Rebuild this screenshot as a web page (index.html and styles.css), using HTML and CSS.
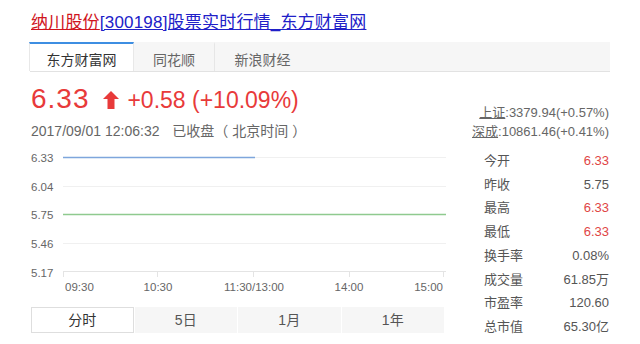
FILE: index.html
```html
<!DOCTYPE html>
<html lang="zh-CN">
<head>
    <meta charset="UTF-8">
    <meta name="viewport" content="width=device-width, initial-scale=1.0">
    <title>纳川股份[300198]股票实时行情_东方财富网</title>
    <link rel="stylesheet" href="styles.css">
</head>
<body>

<div class="page">
    <h1 class="title"><a href="#" class="title-name">纳川股份</a><a href="#" class="title-rest">[300198]股票实时行情_东方财富网</a></h1>

    <div class="tabs">
        <div class="tab active">东方财富网</div>
        <div class="tab tab-ths">同花顺</div>
        <div class="tab tab-sina">新浪财经</div>
    </div>

    <div class="quote">
        <div class="quote-left">
            <div class="price-line">
                <span class="price">6.33</span>
                <svg class="arrow" width="16" height="18" viewBox="0 0 16 18">
                    <path d="M8 0 L16 8 L11.5 8 L11.5 18 L4.5 18 L4.5 8 L0 8 Z" fill="#e83a3a"/>
                </svg>
                <span class="change">+0.58 (+10.09%)</span>
            </div>
            <div class="date-line">
                <span>2017/09/01 12:06:32</span>
                <span class="status">已收盘（ 北京时间 ）</span>
            </div>
        </div>
        <div class="index">
            <div><a href="#">上证</a>:3379.94(+0.57%)</div>
            <div><a href="#">深成</a>:10861.46(+0.41%)</div>
        </div>
    </div>

    <div class="main">
        <div class="chart-col">
            <svg class="chart" width="416" height="150" viewBox="0 0 416 150">
                <line class="grid" x1="33" y1="41.5" x2="416" y2="41.5"/>
                <line class="grid" x1="33" y1="98.5" x2="416" y2="98.5"/>
                <line class="grid" x1="225" y1="12.5" x2="416" y2="12.5"/>
                <line class="axis" x1="33" y1="126.5" x2="416" y2="126.5"/>
                <line class="axis" x1="33.5" y1="126.5" x2="33.5" y2="132"/>
                <line class="axis" x1="127.5" y1="126.5" x2="127.5" y2="132"/>
                <line class="axis" x1="223.5" y1="126.5" x2="223.5" y2="132"/>
                <line class="axis" x1="319.5" y1="126.5" x2="319.5" y2="132"/>
                <line class="axis" x1="413.5" y1="126.5" x2="413.5" y2="132"/>
                <line class="price-path" x1="33" y1="12.5" x2="225" y2="12.5"/>
                <line class="prev-close" x1="33" y1="69.5" x2="416" y2="69.5"/>

                <text class="label" x="1" y="17">6.33</text>
                <text class="label" x="1" y="45.5">6.04</text>
                <text class="label" x="1" y="74">5.75</text>
                <text class="label" x="1" y="103">5.46</text>
                <text class="label" x="1" y="131.5">5.17</text>

                <text class="label" x="35" y="145.5">09:30</text>
                <text class="label" x="128" y="145.5" text-anchor="middle">10:30</text>
                <text class="label" x="224" y="145.5" text-anchor="middle">11:30/13:00</text>
                <text class="label" x="319" y="145.5" text-anchor="middle">14:00</text>
                <text class="label" x="413" y="145.5" text-anchor="end">15:00</text>
            </svg>

            <div class="periods">
                <div class="period active">分时</div>
                <div class="period">5日</div>
                <div class="period">1月</div>
                <div class="period">1年</div>
            </div>
        </div>

        <table class="stats">
            <tr><td>今开</td><td class="up">6.33</td></tr>
            <tr><td>昨收</td><td>5.75</td></tr>
            <tr><td>最高</td><td class="up">6.33</td></tr>
            <tr><td>最低</td><td class="up">6.33</td></tr>
            <tr><td>换手率</td><td>0.08%</td></tr>
            <tr><td>成交量</td><td>61.85万</td></tr>
            <tr><td>市盈率</td><td>120.60</td></tr>
            <tr><td>总市值</td><td>65.30亿</td></tr>
        </table>
    </div>
</div>

</body>
</html>
```

FILE: styles.css
```css
body {
    margin: 0;
    background-color: #fff;
    font-family: "Liberation Sans", "Noto Sans CJK SC", sans-serif;
    color: #333;
}
.page {
    padding: 0 30px;
}
.title {
    margin: 0;
    padding: 11px 0 0 1px;
    font-size: 17px;
    font-weight: normal;
    line-height: 24px;
    letter-spacing: 0.2px;
}
.title a {
    text-decoration: underline;
}
.title-name {
    color: #d0141c;
}
.title-rest {
    color: #2020c8;
}
.tabs {
    display: flex;
    margin-top: 7px;
    height: 29px;
    background-color: #f6f6f6;
    border-bottom: 1px solid #e2e2e2;
}
.tab {
    border-top: 2px solid transparent;
    padding-top: 6px;
    line-height: 21px;
    font-size: 14px;
    color: #666;
    text-align: center;
}
.tab.active {
    width: 103px;
    background-color: #fff;
    border-top-color: #3d8ee2;
    border-left: 1px solid #e8e8e8;
    border-right: 1px solid #e8e8e8;
    margin-left: -1px;
    padding-bottom: 1px;
    color: #333;
}
.tab-ths {
    width: 80px;
    border-right: 1px solid #e6e6e6;
}
.tab-sina {
    width: 95px;
}
.quote {
    display: flex;
    justify-content: space-between;
    align-items: flex-end;
    margin-top: 11px;
    padding-left: 1px;
}
.price-line {
    color: #e83a3a;
    line-height: 32px;
    height: 32px;
    white-space: nowrap;
}
.price {
    font-size: 28px;
    letter-spacing: 1px;
    margin-right: 9px;
}
.arrow {
    vertical-align: baseline;
    margin-bottom: -1px;
}
.change {
    font-size: 23px;
    margin-left: 4px;
}
.date-line {
    margin-top: 7px;
    font-size: 14px;
    line-height: 19px;
    color: #666;
    white-space: nowrap;
}
.status {
    margin-left: 9px;
}
.index {
    margin-right: 1px;
    font-size: 13px;
    line-height: 19px;
    color: #666;
    text-align: right;
}
.index a {
    color: #666;
    text-decoration: underline;
}
.main {
    display: flex;
    margin-top: 4px;
}
.chart-col {
    width: 416px;
}
.chart {
    display: block;
}
.chart .grid {
    stroke: #f0f0f0;
    stroke-width: 1;
}
.chart .axis {
    stroke: #e4e4e4;
    stroke-width: 1;
}
.chart .price-path {
    stroke: #7ea6dc;
    stroke-width: 1.6;
}
.chart .prev-close {
    stroke: #8fca8f;
    stroke-width: 1.6;
}
.chart .label {
    font-family: "Liberation Sans", sans-serif;
    font-size: 11.5px;
    fill: #666;
}
.periods {
    display: grid;
    grid-template-columns: repeat(4, 1fr);
    gap: 1px;
    width: 413px;
    margin: 12px 0 0 1px;
    background-color: #fff;
}
.period {
    height: 26px;
    line-height: 26px;
    background-color: #f6f6f6;
    font-size: 14px;
    color: #555;
    text-align: center;
}
.period.active {
    height: 24px;
    line-height: 24px;
    background-color: #fff;
    border: 1px solid #dedede;
    color: #333;
}
.stats {
    width: 125px;
    margin: 4px 1px 0 auto;
    border-collapse: collapse;
    font-size: 13px;
    color: #555;
}
.stats td {
    padding: 0;
    height: 23.7px;
    line-height: 23.7px;
}
.stats td:last-child {
    text-align: right;
}
.stats .up {
    color: #e04545;
}
```
